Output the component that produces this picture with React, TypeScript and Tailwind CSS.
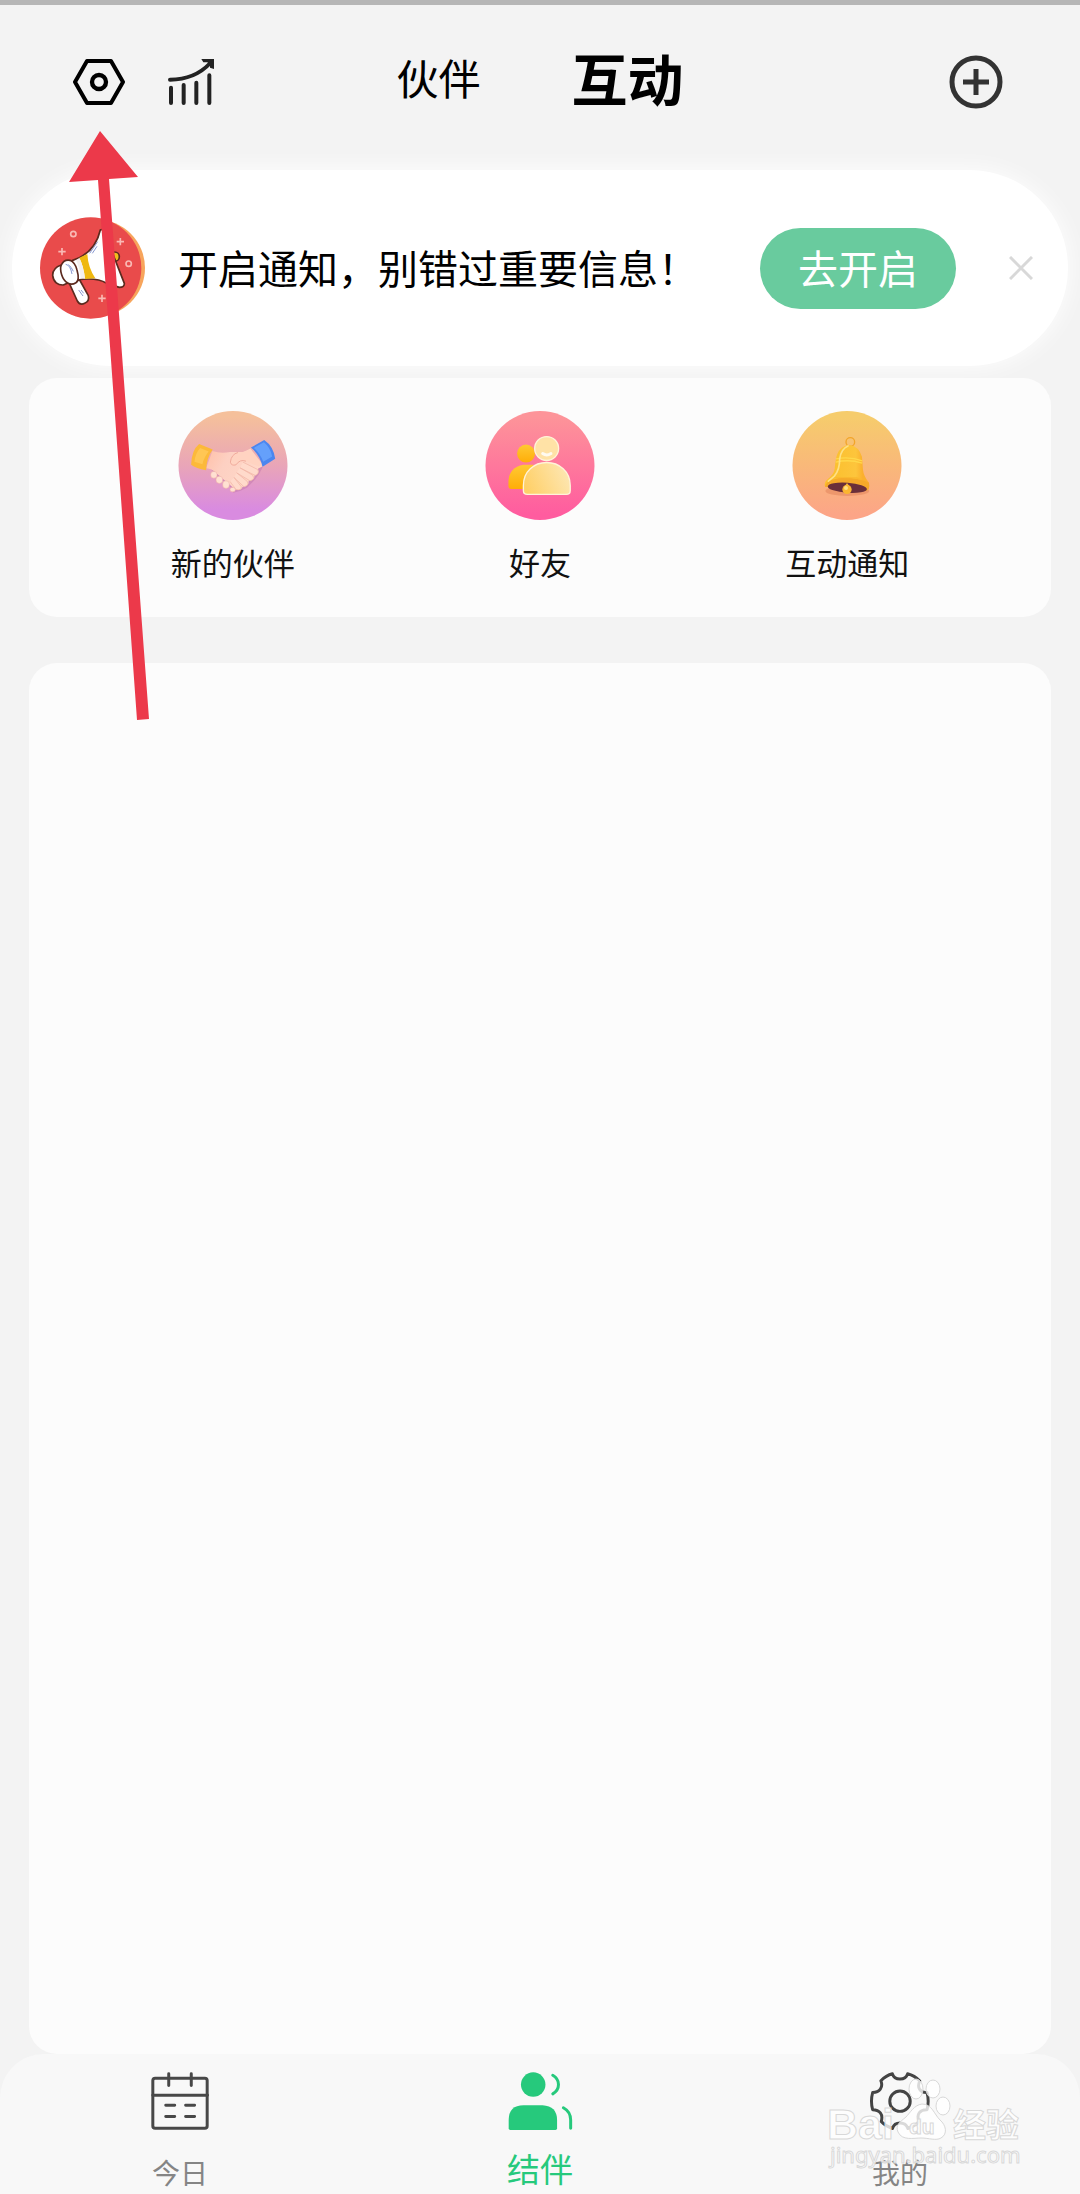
import type { ReactNode } from "react";

const SHORTCUTS = [
    { label: "新的伙伴", icon: <HandshakeIcon /> },
    { label: "好友", icon: <FriendsIcon /> },
    { label: "互动通知", icon: <BellIcon /> },
];

export default function App() {
    return (
        <div className="relative flex min-h-screen flex-col overflow-hidden bg-[#f3f3f3] font-['Noto_Sans_CJK_SC',sans-serif] text-black">
            <div className="h-[5px] bg-[#b6b6b6]" />

            <header className="grid h-[154px] grid-cols-[1fr_auto_1fr] items-center">
                <div className="flex gap-[43px] pl-[73px]">
                    <button type="button" aria-label="设置"><HexIcon /></button>
                    <button type="button" aria-label="统计"><TrendIcon /></button>
                </div>
                <div className="flex items-center gap-[91px] pb-[10px]">
                    <button type="button" className="text-[42px] leading-[64px]">伙伴</button>
                    <button type="button" className="text-[56px] leading-[64px] font-bold">互动</button>
                </div>
                <button type="button" aria-label="添加" className="mr-[77px] justify-self-end"><PlusIcon /></button>
            </header>

            {/* notification banner */}
            <section className="mx-3 mt-[11px] flex h-[196px] items-center rounded-full bg-white pr-[35px] pl-7 shadow-[0_0_20px_4px_rgba(255,255,255,0.7)]">
                <MegaphoneIcon />
                <p className="ml-[33px] flex-1 pb-[3px] text-[40px] leading-[56px] whitespace-nowrap">开启通知，别错过重要信息！</p>
                <button type="button" className="h-[81px] w-[196px] rounded-full bg-[#69cb9e] pb-[3px] text-[40px] leading-[56px] text-white">去开启</button>
                <button type="button" aria-label="关闭" className="ml-[53px]">
                    <svg width="24" height="24" viewBox="0 0 24 24" fill="none" stroke="#d8d8d8" strokeWidth="3"><path d="M1 1 23 23M23 1 1 23" /></svg>
                </button>
            </section>

            {/* shortcuts */}
            <section className="mx-[29px] mt-3 grid grid-cols-3 rounded-[28px] bg-[#fcfcfc] px-[50px] pt-[33px] pb-[31px]">
                {SHORTCUTS.map((s) => (
                    <button key={s.label} type="button" className="flex flex-col items-center gap-[18px] text-[31px] leading-[48px] text-[#111]">
                        {s.icon}
                        <span>{s.label}</span>
                    </button>
                ))}
            </section>

            <main className="mx-[29px] mt-[46px] flex-1 rounded-[28px] bg-[#fcfcfc]" />

            <nav className="grid h-[140px] grid-cols-3 rounded-t-[44px] bg-[#f8f8f8]">
                <Tab icon={<CalendarIcon />} label="今日" />
                <Tab icon={<PartnerIcon />} label="结伴" active />
                <Tab icon={<GearIcon />} label="我的" />
            </nav>

            <Watermark />
            <Arrow />
        </div>
    );
}

function Tab({ icon, label, active }: { icon: ReactNode; label: string; active?: boolean }) {
    return (
        <button type="button" className="flex flex-col items-center pt-[18px]">
            {icon}
            <span className={active ? "mt-[18px] text-[33px] leading-[40px] text-[#26c97c]" : "mt-[22px] text-[28px] leading-[40px] text-[#858585]"}>{label}</span>
        </button>
    );
}

function HexIcon() {
    return (
        <svg width="52" height="46" viewBox="219 177 156 138" fill="none" stroke="#000" strokeWidth="12" strokeLinejoin="round">
            <path d="M261 183H333L369 246 333 309H261L225 246Z" />
            <circle cx="297" cy="246" r="21" strokeWidth="13" />
        </svg>
    );
}

function TrendIcon() {
    return (
        <svg width="46" height="46" viewBox="504 177 138 138" fill="none" stroke="#222" strokeWidth="12" strokeLinecap="round">
            <path d="M513 263V309M551 255V309M589 248V309M628 226V309" />
            <path d="M510 239C555 239 600 222 631 189" />
            <path d="M604 177H642V207L630 203V194L622 187H610Z" fill="#222" stroke="none" />
        </svg>
    );
}

function PlusIcon() {
    return (
        <svg width="54" height="54" viewBox="0 0 54 54" fill="none" stroke="#333" strokeWidth="5">
            <circle cx="27" cy="27" r="24" />
            <path d="M27 14V40M14 27H40" />
        </svg>
    );
}

function MegaphoneIcon() {
    return (
        <svg width="105" height="102" viewBox="120 653 315 306" className="shrink-0">
            <circle cx="290" cy="806" r="145" fill="#f7a55c" />
            <circle cx="272" cy="806" r="152" fill="#e94b4b" />
            <g fill="none" stroke="#f9b9b4" strokeWidth="5">
                <circle cx="220" cy="704" r="8" />
                <circle cx="386" cy="793" r="8" />
                <path d="M186 746V768M175 757H197M361 716V738M350 727H372M306 886V908M295 897H317" />
            </g>
            <g stroke="#5c2a1e" strokeWidth="5" strokeLinejoin="round" strokeLinecap="round">
                <circle cx="344" cy="772" r="14" fill="#f0bf1d" />
                <path d="M301 692C290 740 262 770 216 784L233 842C270 836 300 840 320 852L358 864Q374 864 373 852L312 696Q306 688 301 692Z" fill="#fff" />
                <path d="M207 850 232 905C238 916 246 916 254 912 264 907 268 900 265 889L239 842Z" fill="#fff" />
                <path d="M184 797C168 802 158 812 158 828 160 848 174 858 190 857L205 850Z" fill="#fff" />
                <path d="M184 797C190 784 200 781 210 783 222 788 228 800 231 812 236 830 238 844 228 850 218 856 210 855 203 851 193 845 188 836 185 826 181 814 180 806 184 797Z" fill="#fff" />
            </g>
            <path d="M238 775 262 764Q264 804 286 837L255 839Q251 801 238 775Z" fill="#efb80f" />
            <path d="M228 783Q240 808 242 836L255 838Q251 801 238 776Z" fill="#f3efed" />
            <path d="M293 727 269 762M291 741 277 762M197 795Q211 797 216 824M205 796Q214 802 220 816M236 872 249 890M243 872 251 882" fill="none" stroke="#8797cf" strokeWidth="3" />
        </svg>
    );
}

function HandshakeIcon() {
    return (
        <svg width="110" height="109" viewBox="534 152 330 328">
            <defs>
                <linearGradient id="hs-bg" x1="0" y1="0" x2="0" y2="1">
                    <stop offset="0.05" stopColor="#f5c09b" />
                    <stop offset="0.5" stopColor="#e9a5b8" />
                    <stop offset="0.9" stopColor="#d98be0" />
                </linearGradient>
                <linearGradient id="hs-skin" x1="0" y1="0" x2="1" y2="0.4">
                    <stop offset="0" stopColor="#ffc0a8" />
                    <stop offset="0.4" stopColor="#fdd0c2" />
                    <stop offset="1" stopColor="#ffd8c8" />
                </linearGradient>
            </defs>
            <circle cx="699" cy="316" r="164" fill="url(#hs-bg)" />
            <path d="M622 322Q640 330 652 350L694 384 700 398 722 392 742 382 762 362 777 342 788 322 770 300Z" fill="#c277ac" opacity="0.5" />
            <path d="M637 272Q662 281 690 275L730 275 752 265Q760 292 788 318L774 326Q780 340 764 346 764 360 746 362 748 378 728 380 722 394 706 388L650 340Q636 325 618 324Z" fill="url(#hs-skin)" />
            <g fill="#ffe0d2" stroke="#eeb0a4" strokeWidth="1.5">
                <rect x="632" y="334" width="19" height="20" rx="9" />
                <rect x="648" y="348" width="20" height="22" rx="10" />
                <rect x="668" y="362" width="20" height="23" rx="10" />
                <rect x="690" y="382" width="16" height="13" rx="6" />
            </g>
            <path d="M729 306 773 328Q780 340 766 346L720 323M720 323 758 345Q766 359 750 362L710 338M710 338 742 364Q748 376 732 380L702 352M702 352 724 380Q724 392 708 388L690 364" fill="#ffdacb" stroke="#f0b3a5" strokeWidth="2" strokeLinejoin="round" />
            <path d="M752 266Q736 276 714 277 694 282 691 306 694 318 708 314 720 296 738 303L776 319 788 312Z" fill="#ffd3c1" />
            <path d="M714 277Q694 282 691 306 694 318 708 314 720 296 738 303" fill="none" stroke="#f0ab9c" strokeWidth="3" />
            <path d="M597 251 638 268Q620 292 618 330 588 326 573 314 574 270 597 251Z" fill="#fcb93a" />
            <path d="M600 263 626 274Q612 290 607 312L583 305Q585 280 600 263Z" fill="#ffc654" />
            <path d="M753 262 793 239Q821 258 826 296L788 320Q781 286 753 262Z" fill="#4c86ef" />
            <path d="M762 263 792 246Q812 262 817 289L790 305Q782 281 762 263Z" fill="#65a0fb" />
        </svg>
    );
}

function FriendsIcon() {
    return (
        <svg width="110" height="109" viewBox="135 92 330 328">
            <defs>
                <linearGradient id="fr-bg" x1="0" y1="0" x2="0" y2="1">
                    <stop offset="0.05" stopColor="#fd9499" />
                    <stop offset="0.95" stopColor="#ff5c9f" />
                </linearGradient>
                <linearGradient id="fr-body" x1="0" y1="0.6" x2="1" y2="0.3">
                    <stop offset="0" stopColor="#ffd068" />
                    <stop offset="1" stopColor="#fde7b5" />
                </linearGradient>
                <linearGradient id="fr-back" x1="0" y1="0" x2="0" y2="1">
                    <stop offset="0" stopColor="#ffc933" />
                    <stop offset="1" stopColor="#ffad08" />
                </linearGradient>
            </defs>
            <circle cx="300" cy="256" r="164" fill="url(#fr-bg)" />
            <circle cx="258" cy="220" r="27" fill="url(#fr-back)" />
            <path d="M205 303Q207 262 250 254H280V327H214Q205 327 205 318Z" fill="url(#fr-back)" />
            <g stroke="#fff3d9" strokeWidth="4">
                <circle cx="320" cy="205" r="36" fill="#ffe2a6" />
                <path d="M250 316C250 274 282 247 320 247 358 247 391 274 391 316V331Q391 343 379 343H262Q250 343 250 331Z" fill="url(#fr-body)" />
            </g>
            <path d="M308 220Q320 229 333 220" fill="none" stroke="#fffaf0" strokeWidth="9" strokeLinecap="round" />
        </svg>
    );
}

function BellIcon() {
    return (
        <svg width="110" height="109" viewBox="155 92 330 328">
            <defs>
                <linearGradient id="bell-bg" x1="0" y1="0" x2="0" y2="1">
                    <stop offset="0.05" stopColor="#f6cc6c" />
                    <stop offset="0.95" stopColor="#fca587" />
                </linearGradient>
                <linearGradient id="bell-body" x1="0" y1="0" x2="1" y2="0">
                    <stop offset="0.2" stopColor="#fbc02f" />
                    <stop offset="0.7" stopColor="#fdc53c" />
                    <stop offset="0.85" stopColor="#fbb02e" />
                </linearGradient>
            </defs>
            <circle cx="320" cy="256" r="164" fill="url(#bell-bg)" />
            <ellipse cx="321" cy="333" rx="66" ry="15" fill="#d9754e" opacity="0.4" />
            <circle cx="330" cy="185" r="13" fill="none" stroke="#f2a529" strokeWidth="4" />
            <path d="M328 194Q300 195 290 224 285 240 283 266 280 284 260 299 250 308 254 320L380 331Q389 328 386 308 370 288 368 268L365 230Q356 198 328 194Z" fill="url(#bell-body)" />
            <path d="M254 320Q256 308 272 300 326 282 386 308 389 328 380 331Z" fill="#f5a92a" />
            <path d="M264 294Q318 292 368 298L350 291H276Z" fill="#fab72e" />
            <ellipse cx="321" cy="323" rx="59" ry="15" fill="#6a2f3a" transform="rotate(4 321 323)" />
            <path d="M287 236Q328 228 366 242M286 246Q326 236 366 249" fill="none" stroke="#ffd84a" strokeWidth="4" />
            <path d="M323 197Q302 206 298 236 298 270 282 288L264 303" fill="none" stroke="#fee085" strokeWidth="5" strokeLinecap="round" />
            <path d="M320 309 328 320H313Z" fill="#fbc23c" />
            <circle cx="320" cy="328" r="14" fill="#fbb631" />
            <circle cx="317" cy="324" r="6" fill="#ffe083" />
        </svg>
    );
}

function CalendarIcon() {
    return (
        <svg width="58" height="58" viewBox="453 125 174 175" fill="none" stroke="#484848" strokeWidth="9" strokeLinecap="round">
            <rect x="458" y="144" width="164" height="151" rx="7" />
            <path d="M458 195H623M506 130V166M574 130V166M497 225H524M557 225H584M497 259H524M557 259H584" />
        </svg>
    );
}

function PartnerIcon() {
    return (
        <svg width="65" height="58" viewBox="203 95 194 175" fill="#26c97c">
            <circle cx="278" cy="133" r="37" />
            <path d="M204 240Q204 195 249 195H306Q350 197 350 240V265Q350 270 345 270H209Q204 270 204 265Z" />
            <path d="M337 105C360 118 360 148 337 161M369 203Q391 215 391 240V265" fill="none" stroke="#26c97c" strokeWidth="9" strokeLinecap="round" />
        </svg>
    );
}

function GearIcon() {
    return (
        <svg width="60" height="58" viewBox="209 95 182 175" fill="none" stroke="#444" strokeWidth="9" strokeLinejoin="round">
            <path d="M277 100C283 121 317 121 323 100Q344 105 360 122C350 142 362 158 382 157Q389 183 382 209C362 208 348 222 358 245Q344 260 324 266C316 244 284 244 277 266Q257 260 243 245C250 222 238 210 217 209Q210 183 217 157C238 156 250 142 242 121Q258 105 277 100Z" />
            <circle cx="300" cy="183" r="31" />
        </svg>
    );
}

function Watermark() {
    return (
        <svg className="pointer-events-none absolute right-[56px] bottom-[18px]" width="200" height="104" viewBox="0 0 200 104" fill="#fff" fillOpacity="0.8" stroke="#d8d8d8" strokeWidth="1">
            <ellipse cx="92" cy="17" rx="7" ry="10" />
            <ellipse cx="109" cy="17" rx="7" ry="9" />
            <ellipse cx="119" cy="34" rx="7" ry="9" />
            <path d="M98 32C90 33 86 41 82 45 76 50 71 53 74 60 78 69 90 66 97 66 105 66 112 69 117 66 124 62 122 53 116 48 110 42 108 32 98 32Z" />
            <g fontFamily="Liberation Sans, sans-serif" fontWeight="700">
                <text x="3" y="67" fontSize="43">Bai</text>
                <text x="85" y="62" fontSize="21">du</text>
            </g>
            <text x="129" y="65" fontSize="33" fontWeight="700" fontFamily="Noto Sans CJK SC, sans-serif">经验</text>
            <text x="6" y="91" fontSize="22" fontFamily="Noto Sans, sans-serif">jingyan.baidu.com</text>
        </svg>
    );
}

function Arrow() {
    return (
        <svg className="pointer-events-none absolute top-[131px] left-[69px]" width="82" height="590" viewBox="69 131 82 590" fill="#ec394a">
            <path d="M100 131 138 177 109 179 149 719 137 720 98 180 69 182Z" />
        </svg>
    );
}
